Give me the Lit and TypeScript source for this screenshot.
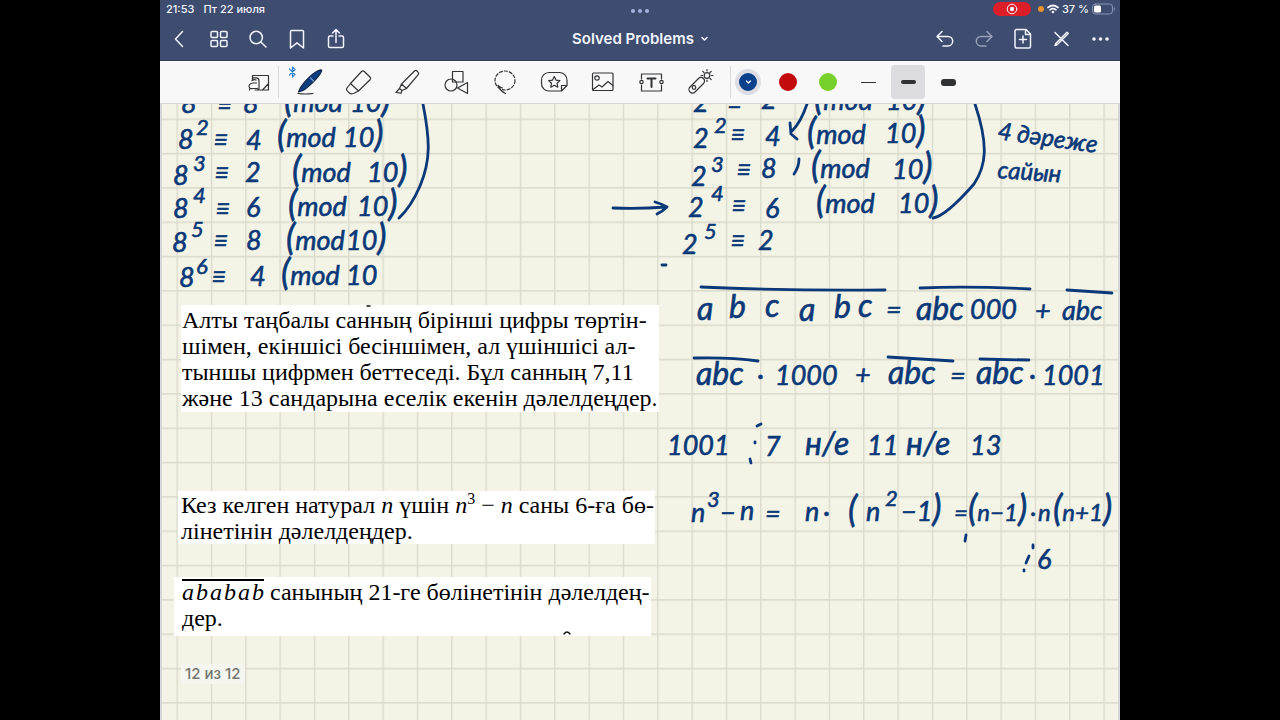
import { LitElement, html, css, svg } from "lit";
import { customElement, state } from "lit/decorators.js";

type Ink = [text: string, x: number, y: number, kind?: "s" | "m" | "b"];

// Handwritten words: text, x, baseline, and size (s = superscript, m = medium, b = large)
const INK: Ink[] = [
  ["8", 181, 113], ["≡", 217, 113], ["8", 243, 113], ["(mod", 284, 112], ["10)", 350, 112],
  ["8", 178, 149], ["2", 196, 135, "s"], ["≡", 213, 149], ["4", 246, 150], ["(mod", 277, 147], ["10)", 343, 147],
  ["8", 173, 185], ["3", 193, 171, "s"], ["≡", 214, 182], ["2", 245, 182], ["(mod", 292, 182], ["10)", 367, 182],
  ["8", 173, 218], ["4", 193, 203, "s"], ["≡", 215, 218], ["6", 246, 217], ["(mod", 288, 216], ["10)", 357, 216],
  ["8", 172, 252], ["5", 191, 237, "s"], ["≡", 213, 250], ["8", 246, 250], ["(mod", 286, 250], ["10)", 346, 250],
  ["8", 179, 287], ["6", 196, 274, "s"], ["≡", 211, 286], ["4", 250, 286], ["(mod", 281, 285], ["10", 346, 285],

  ["2", 693, 112], ["≡", 727, 112], ["2", 761, 109], ["(mod", 814, 110], ["10)", 886, 110],
  ["2", 693, 148], ["2", 714, 133, "s"], ["≡", 730, 144], ["4", 765, 146], ["(mod", 807, 144], ["10)", 885, 143],
  ["2", 691, 186], ["3", 711, 172, "s"], ["≡", 736, 179], ["8", 761, 178], ["(mod", 811, 178], ["10)", 892, 179],
  ["2", 688, 217], ["4", 711, 201, "s"], ["≡", 731, 215], ["6", 765, 218], ["(mod", 816, 213], ["10)", 898, 213],
  ["2", 682, 254], ["5", 704, 239, "s"], ["≡", 730, 250], ["2", 758, 250],

  ["a", 697, 320, "b"], ["b", 729, 318, "b"], ["c", 765, 317, "b"], ["a", 799, 321, "b"], ["b", 834, 318, "b"], ["c", 858, 317, "b"],
  ["=", 886, 319], ["abc", 916, 320, "b"], ["000", 970, 319], ["+", 1035, 320], ["abc", 1062, 320],
  ["abc", 696, 385, "b"], ["·", 757, 385], ["1000", 775, 385], ["+", 855, 384], ["abc", 888, 384, "b"], ["=", 950, 385],
  ["abc", 976, 384, "b"], ["·", 1029, 385], ["1001", 1042, 385],
  ["1001", 667, 455], ["7", 765, 456], ["н/е", 805, 455, "b"], ["11", 867, 455], ["н/е", 906, 455, "b"], ["13", 970, 455],
  ["n", 691, 522], ["3", 707, 507, "s"], ["−", 720, 522], ["n", 740, 520], ["=", 765, 523], ["n", 805, 521], ["·", 823, 522],
  ["(", 848, 522], ["n", 866, 521], ["2", 885, 506, "s"], ["−1)", 901, 521], ["=", 954, 521, "m"],
  ["(n−1)", 968, 521, "m"], ["·", 1030, 521, "m"], ["n", 1038, 521, "m"], ["(n+1)", 1053, 521, "m"],
  ["6", 1037, 569],
];

// Pen marks: rules, arrows, ticks and the long closing sweeps
const MARKS = [
  "M423 104C430 140 431 160 420 186Q411 207 399 218",
  "M975 104C989 146 986 166 974 184Q946 216 933 218",
  "M613 208Q640 209 666 207M655 202Q662 204 667 207Q663 211 657 214",
  "M807 104Q801 122 792 131M790 123L791 134L797 139",
  "M799 159Q799 167 794 174",
  "M662 265L666 265",
  "M701 287Q790 291 885 290",
  "M920 288Q970 286 1030 289",
  "M1067 290L1112 293",
  "M694 358Q730 357 758 361",
  "M888 357Q920 359 953 361",
  "M980 359L1029 360",
  "M757 426L761 424M755 442L755 443M750 459L751 463",
  "M966 535L965 541",
  "M1033 545L1033 548M1029 556L1026 563M1024 570L1024 571",
];

const P = (d: string) => svg`<path d=${d}></path>`;

// Brackets are written taller than the letters between them
const word = (t: string) => t.split(/([()])/).filter(Boolean).map((p) => (p === "(" || p === ")" ? svg`<tspan class="tall">${p}</tspan>` : svg`<tspan>${p}</tspan>`));

const ICONS: Record<string, unknown> = {
  back: P("M14.500 4.500L7.500 12L14.500 19.500"),
  grid: P("M5 4.500h4.500a1 1 0 0 1 1 1v4a1 1 0 0 1-1 1h-4.500a1 1 0 0 1-1-1v-4a1 1 0 0 1 1-1zM14.500 4.500h4.500a1 1 0 0 1 1 1v4a1 1 0 0 1-1 1h-4.500a1 1 0 0 1-1-1v-4a1 1 0 0 1 1-1zM5 13.500h4.500a1 1 0 0 1 1 1v4a1 1 0 0 1-1 1h-4.500a1 1 0 0 1-1-1v-4a1 1 0 0 1 1-1zM14.500 13.500h4.500a1 1 0 0 1 1 1v4a1 1 0 0 1-1 1h-4.500a1 1 0 0 1-1-1v-4a1 1 0 0 1 1-1z"),
  search: P("M4 10.500a6.200 6.200 0 1 0 12.400 0a6.200 6.200 0 1 0-12.400 0M14.800 15l5.200 5"),
  bookmark: P("M6.500 3.500h11a1 1 0 0 1 1 1v16.500l-6.500-5.200l-6.500 5.200v-16.500a1 1 0 0 1 1-1"),
  share: P("M9 9h-3a1.500 1.500 0 0 0-1.500 1.500v8.500a1.500 1.500 0 0 0 1.500 1.500h12a1.500 1.500 0 0 0 1.500-1.500v-8.500a1.500 1.500 0 0 0-1.500-1.500h-3M12 15.500v-12.500M8.500 6L12 2.600L15.500 6"),
  undo: P("M9 4.500L4 9.500L9 14.500M4 9.500H15a4.700 4.700 0 0 1 0 9.400H10"),
  redo: P("M15 4.500L20 9.500L15 14.500M20 9.500H9a4.700 4.700 0 0 0 0 9.400H14"),
  addPage: P("M5.500 2.500h9.500l4.500 4.500v12.500a1.500 1.500 0 0 1-1.500 1.500h-12.500a1.500 1.500 0 0 1-1.500-1.500v-15.500a1.500 1.500 0 0 1 1.500-1.500zM14.500 2.500v5h5M12 9v7M8.500 12.500h7"),
  penOff: P("M5 5.500L18 18.500M5 18.500L6 16.200L17 5.200L18.300 6.500L7.300 17.500z"),
  dots: svg`<g class="solid"><circle cx="5" cy="12" r="1.800"></circle><circle cx="11.500" cy="12" r="1.800"></circle><circle cx="18" cy="12" r="1.800"></circle></g>`,
  lens: svg`<path d="M6.500 12V7.500H22.500V22H9M16.500 22L22.500 15.500M7 9.800h3a3 3 0 0 1 3 3V20q0 2-2 2"></path><path d="M3 18.500q0-3 4-3.500h3.500M3 18.500q.5 2.500 4 2h4.500M4 20l-.500 2M6 12.500q2-1.500 4-.500"></path>`,
  pen: svg`<path class="nib" d="M4.500 25L6.500 20.500C10 15 19 5 26.500 2.800Q28.300 2.500 27.500 4.300C25 10.500 14 20.500 9 23.500z"></path><path class="fine" d="M4 26.500q7 1 15 0"></path><path class="gleam" d="M16.500 11l3 3"></path>`,
  eraser: P("M7.500 16.500L18.500 4.500a2 2 0 0 1 2.800 0L27 10a2 2 0 0 1 0 2.800L15.500 24zM7.500 16.500l-3.500 4.500a2 2 0 0 0 0 2.600l2.600 2.700q1.500 1 4 .2L15.500 24"),
  marker: P("M9.500 17L22.500 4a1.800 1.800 0 0 1 2.400 0l1.300 1.300a1.800 1.800 0 0 1 0 2.400L14.500 21.500zM9.500 17l-2 4.500l2.500 2l4.500-2M7.500 21.500l-3.500 4l5 .7l1-2.700"),
  shapes: svg`<rect x="11.500" y="4.500" width="10.500" height="10.500"></rect><circle cx="10" cy="18" r="6"></circle><path d="M16.500 21L26.500 15.500v11z"></path>`,
  lasso: svg`<ellipse class="dash" cx="15" cy="13.500" rx="10" ry="9.500"></ellipse><path d="M8 18.500q1.500 5 7.500 8M8 18.500q2 2 4.500 2.500"></path>`,
  sticker: svg`<path d="M22.500 24H10a7.500 7.500 0 0 1-7.500-7.500V13.500a7.500 7.500 0 0 1 7.500-8h11a7.500 7.500 0 0 1 7 8v5zM22.500 24v-5.500h5.500"></path><path d="M15.300 9.500l1.700 3.600l3.900.5l-2.800 2.700l.7 3.900l-3.500-1.900l-3.500 1.900l.7-3.900l-2.800-2.700l3.900-.5z"></path>`,
  image: svg`<rect x="4.500" y="6" width="20.500" height="17.500" rx="1"></rect><circle cx="9" cy="11" r="2.200"></circle><path d="M5 22.500l6-4.500l3 2l6-5.500l5 4"></path>`,
  text: svg`<path d="M4.500 12V7H24.500V12M4.500 18V24H24.500V18"></path><circle cx="4.500" cy="15" r="1.700"></circle><circle cx="24.500" cy="15" r="1.700"></circle><path class="bold" d="M10.500 11.500h8M14.500 11.500v8.500"></path>`,
  laser: svg`<path d="M4 20L12.500 11.500a3.200 3.200 0 0 1 5 5L9 25a3.500 3.500 0 0 1-5-5z"></path><circle cx="8" cy="20.500" r="1.800"></circle><circle cx="21" cy="8.500" r="2.800"></circle><path d="M21 2.500v1.500M21 13v1.500M15 8.500h1.500M25.500 8.500h1.500M16.800 4.300l1.200 1.200M24 5.500L25.200 4.300M24 11.500l1.200 1.200"></path>`,
};

@customElement("app-root")
export class AppRoot extends LitElement {
  @state() private tool = "pen";
  @state() private width = 4;

  static styles = css`
    :host { display: flex; justify-content: center; min-height: 100vh; background: #000; font-family: Inter, "Noto Sans", sans-serif; }
    .device { display: flex; flex-direction: column; width: 100%; max-width: calc(100vh * 4 / 3); min-height: 100vh; background: #f3f4e5; overflow: hidden; }
    button { appearance: none; border: 0; padding: 0; margin: 0; background: none; color: inherit; font: inherit; display: grid; place-items: center; flex: none; }
    svg { display: block; fill: none; stroke: currentColor; stroke-linecap: round; stroke-linejoin: round; }
    .head { background: #3e4c70; color: #f1f4fc; border-bottom: 1px solid #313a57; }
    .status { display: grid; grid-template-columns: 1fr auto 1fr; align-items: center; height: 18px; padding: 0 5px; font-size: 11px; line-height: 18px; font-weight: 500; }
    .clock { display: flex; gap: 9px; padding-left: 1px; }
    .more { display: flex; gap: 3px; padding-top: 4px; }
    .more span { width: 4px; height: 4px; border-radius: 50%; background: #a3b2dc; }
    .side { display: flex; justify-content: flex-end; align-items: center; gap: 3px; }
    .rec { width: 38px; height: 14px; border-radius: 7px; background: #dd1d28; display: grid; place-items: center; margin-right: 4px; }
    .mic { width: 6px; height: 6px; border-radius: 50%; background: #e8912a; }
    .nav { display: grid; grid-template-columns: 1fr auto 1fr; align-items: center; height: 42px; }
    .group { display: flex; }
    .end { justify-content: flex-end; }
    .nav button { width: 39px; height: 40px; }
    .nav svg { stroke-width: 1.500; }
    .nav .dim { opacity: .5; }
    .nav .title { display: flex; align-items: center; gap: 7px; width: auto; }
    h1 { margin: 0; font-size: 15px; line-height: 20px; font-weight: 600; }
    .solid { fill: currentColor; stroke: none; }
    .tools { display: flex; align-items: center; height: 42px; padding-left: 79px; background: #f8f8f9; color: #333436; border-bottom: 1px solid #d5d5d3; }
    .tools svg { stroke-width: 1.200; }
    .tools .lens { width: 39px; height: 40px; }
    .rule { width: 1px; height: 32px; background: #d9d9db; }
    .pens { display: flex; padding: 0 5px; }
    .pens button { width: 49px; height: 40px; position: relative; }
    .bt { position: absolute; left: 4px; top: 3px; color: #2f86d8; }
    .nib { fill: #0c3d80; stroke: #16294a; }
    .gleam { stroke: #7d9cc6; }
    .dash { stroke-dasharray: 3 2; }
    .bold { stroke-width: 2; }
    .swatches { display: flex; gap: 6px; }
    .swatches button { width: 34px; height: 34px; border-radius: 4px; }
    .dot { width: 18px; height: 18px; border-radius: 50%; display: grid; place-items: center; color: #fff; border: 4px solid transparent; }
    .blue .dot { background: #0b408b; border-color: #dcdee3; }
    .red .dot { background: #c30a0c; background-clip: padding-box; }
    .green .dot { background: #78d12b; background-clip: padding-box; }
    .swatches .on { background: #dcdcde; }
    .bar { display: block; width: 15px; border-radius: 3px; background: #303133; }
    .thin { height: 1px; } .mid { height: 4px; } .thick { height: 7px; }
    .page { position: relative; flex: 1; border: solid #d6d7dc; border-width: 0 2px; color: #000; }
    .paper { position: absolute; left: 0; top: 0; }
    .paper path { stroke: #d9dacb; stroke-width: 1.300; }
    .ink { position: absolute; left: -2px; top: 0; color: #0a3878; stroke-width: 2.800; }
    .ink text { fill: currentColor; stroke-width: .6; font: italic 400 27px Lato, "Noto Sans", sans-serif; white-space: pre; }
    .ink text.s { font-size: 22px; }
    .ink text.m { font-size: 24px; }
    .ink text.b { font-size: 32px; }
    .tall { font-size: 36px; }
    .clip { position: absolute; margin: 0; padding: 2px; background: #fff; font: 24px/26px "Liberation Serif", serif; white-space: nowrap; box-sizing: border-box; width: 477px; overflow: hidden; }
    .one { left: 19px; top: 201px; height: 107px; padding-left: 1px; width: 478px; }
    .two { left: 16px; top: 387px; height: 53px; padding: 1px 3px; }
    .three { left: 12px; top: 473px; height: 59px; padding: 2px 8px; }
    .over { border-top: 2px solid #000; font-style: italic; line-height: 22px; display: inline-flex; gap: 2px; }
    sup { font-size: 16px; line-height: 0; }
    .count { position: absolute; left: 19px; top: 560px; padding: 0 4px; border-radius: 3px; background: #f6f6f0; color: #74756f; font-size: 15px; line-height: 20px; font-weight: 500; }
  `;

  private navBtn(name: string, label: string, cls = "") {
    return html`<button class=${cls} aria-label=${label}><svg width="24" height="24" viewBox="0 0 24 24">${ICONS[name]}</svg></button>`;
  }

  render() {
    const pens = [["pen", "Ручка"], ["eraser", "Ластик"], ["marker", "Маркер"], ["shapes", "Фигуры"], ["lasso", "Лассо"], ["sticker", "Стикеры"], ["image", "Изображение"], ["text", "Текст"], ["laser", "Указка"]];
    const widths: [number, string][] = [[1, "thin"], [4, "mid"], [7, "thick"]];
    return html`
      <div class="device">
        <header class="head">
          <div class="status">
            <div class="clock"><span>21:53</span><span>Пт 22 июля</span></div>
            <div class="more"><span></span><span></span><span></span></div>
            <div class="side">
              <span class="rec"><svg width="12" height="12" viewBox="0 0 12 12"><circle cx="6" cy="6" r="4.800"></circle><circle class="solid" cx="6" cy="6" r="2.200"></circle></svg></span>
              <span class="mic"></span>
              <svg width="12" height="10" viewBox="0 0 12 10" stroke-width="1.700"><path d="M1 3.500q5-4 10 0M3 5.800q3-2.300 6 0"></path><circle class="solid" cx="6" cy="8" r="1.300"></circle></svg>
              <span>37 %</span>
              <svg width="23" height="12" viewBox="0 0 23 12"><rect x=".5" y="1" width="20" height="10" rx="3" stroke="#8994b2"></rect><rect x="2" y="2.500" width="7" height="7" rx="1.500" fill="#fff" stroke="none"></rect><path d="M22.300 4.800v2.400" stroke="#8994b2"></path></svg>
            </div>
          </div>
          <nav class="nav">
            <div class="group">
              ${this.navBtn("back", "Назад")}${this.navBtn("grid", "Миниатюры")}${this.navBtn("search", "Поиск")}${this.navBtn("bookmark", "Закладка")}${this.navBtn("share", "Поделиться")}
            </div>
            <button class="title"><h1>Solved Problems</h1><svg width="7" height="6" viewBox="0 0 7 6" stroke-width="1.300"><path d="M1 1.500L3.500 4L6 1.500"></path></svg></button>
            <div class="group end">
              ${this.navBtn("undo", "Отменить")}${this.navBtn("redo", "Повторить", "dim")}${this.navBtn("addPage", "Добавить страницу")}${this.navBtn("penOff", "Режим чтения")}${this.navBtn("dots", "Ещё")}
            </div>
          </nav>
        </header>
        <div class="tools" role="toolbar">
          <button class="lens" aria-label="Лупа"><svg width="26" height="28" viewBox="0 0 26 28">${ICONS.lens}</svg></button>
          <span class="rule"></span>
          <div class="pens">
            ${pens.map(([id, label]) => html`<button aria-label=${label} aria-pressed=${this.tool === id} @click=${() => (this.tool = id)}>
              ${id === "pen" ? html`<svg class="bt" width="9" height="14" viewBox="0 0 9 14"><path d="M1.500 4L7 9.500L4.500 12V2L7 4.500L1.500 10"></path></svg>` : ""}
              <svg width="30" height="30" viewBox="0 0 30 30">${ICONS[id]}</svg></button>`)}
          </div>
          <span class="rule"></span>
          <div class="swatches">
            <button class="blue" aria-label="Синий"><span class="dot"><svg width="7" height="6" viewBox="0 0 7 6"><path d="M1.500 2L3.500 4L5.500 2"></path></svg></span></button>
            <button class="red" aria-label="Красный"><span class="dot"></span></button>
            <button class="green" aria-label="Зелёный"><span class="dot"></span></button>
            ${widths.map(([w, c]) => html`<button class=${this.width === w ? "on" : ""} aria-label="Толщина ${w}" @click=${() => (this.width = w)}><span class="bar ${c}"></span></button>`)}
          </div>
        </div>
        <main class="page">
          <svg class="paper" width="100%" height="100%">
            <defs><pattern id="cell" x="14.500" y="14.500" width="34.330" height="34.330" patternUnits="userSpaceOnUse"><path d="M.7 0V34.330M0 .7H34.330"></path></pattern></defs>
            <rect width="100%" height="100%" fill="url(#cell)" stroke="none"></rect>
          </svg>
          <p class="clip one">Алты таңбалы санның бірінші цифры төртін-<br>шімен, екіншісі бесіншімен, ал үшіншісі ал-<br>тыншы цифрмен беттеседі. Бұл санның 7,11<br>және 13 сандарына еселік екенін дәлелдеңдер.</p>
          <p class="clip two">Кез келген натурал <i>n</i> үшін <i>n</i><sup>3</sup> − <i>n</i> саны 6-ға бө-<br>лінетінін дәлелдеңдер.</p>
          <p class="clip three"><span class="over">${[..."ababab"].map((c) => html`<span>${c}</span>`)}</span> санының 21-ге бөлінетінін дәлелдең-<br>дер.</p>
          <svg class="ink" width="960" height="616" viewBox="160 104 960 616">
            ${INK.map(([t, x, y, k]) => svg`<text class=${k ?? ""} x=${x} y=${y}>${word(t)}</text>`)}
            <text class="m" x="997" y="139" transform="rotate(8 997 139)">4 дәреже</text>
            <text class="m" x="997" y="178" transform="rotate(4 997 178)">сайын</text>
            ${MARKS.map((d) => P(d))}
            <path d="M367 306h3M564 634q3-4 6 0" stroke="#111" stroke-width="1.300"></path>
          </svg>
          <span class="count">12 из 12</span>
        </main>
      </div>`;
  }
}
